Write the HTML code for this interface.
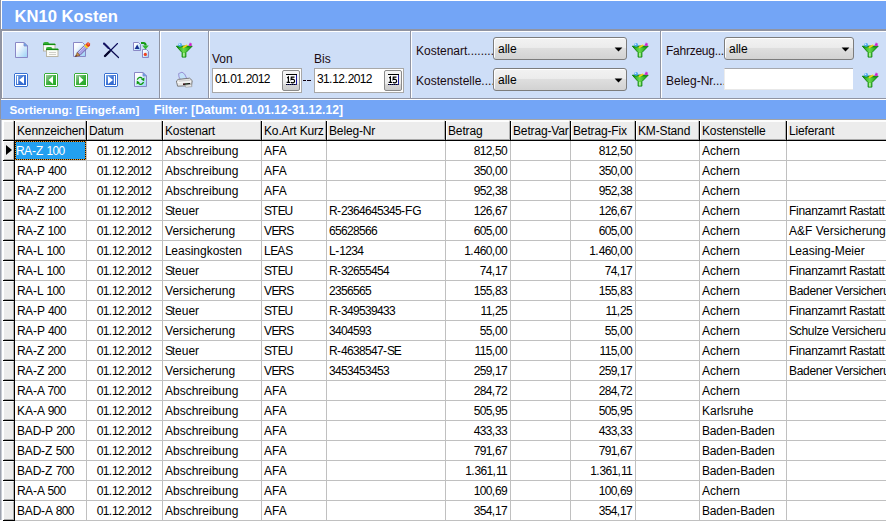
<!DOCTYPE html><html><head><meta charset="utf-8"><title>KN10 Kosten</title><style>
*{margin:0;padding:0;box-sizing:border-box}
html,body{width:886px;height:521px;overflow:hidden;background:#fff;position:relative;font-family:"Liberation Sans",sans-serif;color:#000}
div{position:absolute}
#lb{left:0;top:0;width:1px;height:521px;background:#9094a2}
#lw{left:1px;top:0;width:1px;height:120px;background:#fff}
#title{left:2px;top:1px;width:884px;height:28px;background:#73a5f6}
#title span{position:absolute;left:12.5px;top:6px;font-size:16.6px;font-weight:bold;color:#fff;white-space:nowrap}
#tl1{left:1px;top:29px;width:885px;height:2px;background:#9094a2}
#tgl{left:1px;top:29px;width:1px;height:70px;background:#9094a2}
#tw1{left:2px;top:31px;width:884px;height:1px;background:#fff}
#tw2{left:2px;top:31px;width:1px;height:67px;background:#fff}
#tb{left:3px;top:32px;width:883px;height:66px;background:#cedef7}
#tl2{left:1px;top:98px;width:885px;height:1px;background:#9094a2}
#status{left:1px;top:100px;width:885px;height:19px;background:#73a5f6;color:#fff;font-weight:bold;font-size:12px;white-space:nowrap}
#status span{position:absolute;top:3px}
.sep{top:31px;width:2px;height:67px;border-left:1px solid #9094a2;border-right:1px solid #fff}
.lbl{font-size:12px;white-space:nowrap;color:#1a0a10}
.date{height:25px;background:#fff;border:1px solid #a8a8a8}
.date>span{position:absolute;left:2px;top:3px;font-size:12px}
.calbtn{width:18px;height:21px;border:1px solid #8a8a8a;border-radius:2px;background:linear-gradient(#f6f6f6,#ececec 65%,#d6d6d6 72%,#cccccc)}
.calbtn i{position:absolute;left:3px;top:3px;width:11px;height:10px;background:#fff;border-top:1px solid #000;border-right:1px solid #1010a0;border-bottom:1px dotted #1010a0}
.calbtn b{position:absolute;left:4px;top:4px;font-size:9px;font-weight:bold;letter-spacing:-0.5px}
.combo{height:23px;border:1px solid #7c7c7c;border-radius:3px;background:linear-gradient(#f2f2f2 0%,#ececec 45%,#dedede 50%,#d2d2d2 100%);box-shadow:inset 1px 1px 0 #fff}
.combo span{position:absolute;left:4px;top:4px;font-size:12px}
.combo i{position:absolute;right:4px;top:9px;width:0;height:0;border-left:3.5px solid transparent;border-right:3.5px solid transparent;border-top:4px solid #000}
.txt{height:22px;background:#fff;border-top:1px solid #a6a8ae;border-left:1px solid #ececec;border-bottom:1px solid #e8e8e8}
svg{position:absolute}
#grid{left:0;top:119px;width:886px;height:402px;background:#fff}
.gl0{left:0;top:0;width:1px;height:401px;background:#9ea2ad}
.gl1{left:1px;top:0;width:1px;height:401px;background:#c8ccd4}
.gl2{left:2px;top:0;width:2px;height:401px;background:#fff}
.hc{top:1px;height:20px;background:#ececec;border-top:2px solid #fdfdfd;border-bottom:1px solid #a8a8a8;font-size:12px;white-space:nowrap;overflow:hidden;border-left:1px solid #fff;border-right:1px solid #b0b0b0}
.hc span{position:absolute;left:1px;top:2px;letter-spacing:-0.15px}
.hl{top:2px;width:1px;height:19px;background:#000}
.hb{left:3px;top:21px;width:883px;height:1px;background:#000}
.rhh{left:4px;top:1px;width:10px;height:20px;background:#ececec;border-top:2px solid #fdfdfd;border-bottom:1px solid #a8a8a8;border-right:1px solid #b0b0b0}
.rh{left:4px;width:10px;height:19px;background:#ececec;border-top:1px solid #fff;border-bottom:1px solid #a8a8a8;border-right:1px solid #b0b0b0}
.rl{left:3px;width:11px;height:1px;background:#000}
.cell{height:19px;font-size:12px;white-space:nowrap;overflow:hidden;padding-top:3px}
.cell.al{padding-left:2px}
.cell.ac{text-align:center;padding-right:1px}
.cell.ar{text-align:right;padding-right:3px}
.d{letter-spacing:-0.67px}
.s1{letter-spacing:-0.35px}.s2{letter-spacing:-0.6px}.s3{letter-spacing:-0.8px}.s4{letter-spacing:-1.1px}.s5{letter-spacing:-1.3px}
.sel{background:linear-gradient(#22a0f0,#22a0f0) padding-box,linear-gradient(#111,#111) border-box;color:#fff;border:1px dotted #f09a20;padding-top:2px}
.sel.al{padding-left:0}
.vl{top:22px;width:1px;height:380px;background:#c0c0c0}
.rowl{left:15px;width:871px;height:1px;background:#c0c0c0}
.tri{left:6px;top:26px;width:0;height:0;border-top:5.5px solid transparent;border-bottom:5.5px solid transparent;border-left:6.5px solid #000}
.gtop{left:1px;top:0;width:885px;height:1px;background:#a4a4a4}
.vblk{left:14px;top:2px;width:1px;height:400px;background:#000}

</style></head><body>
<div id="lb"></div>
<div id="lw"></div>
<div id="title"><span>KN10 Kosten</span></div>
<div id="tb"></div>
<div id="tl1"></div>
<div id="tgl"></div>
<div id="tw1"></div>
<div id="tw2"></div>
<div id="tl2"></div>
<div id="status"><span style="left:8.5px;font-size:11.7px">Sortierung: [Eingef.am]</span><span style="left:153px;font-size:12.15px">Filter: [Datum: 01.01.12-31.12.12]</span></div>
<div class="sep" style="left:159px"></div>
<div class="sep" style="left:208px"></div>
<div class="sep" style="left:410px"></div>
<div class="sep" style="left:660px"></div>
<svg width="886" height="100" style="left:0;top:0">
<defs>
<linearGradient id="pg" x1="0" y1="0" x2="1" y2="1"><stop offset="0" stop-color="#ffffff"/><stop offset="0.3" stop-color="#f6f9fe"/><stop offset="1" stop-color="#96d0f6"/></linearGradient>
<linearGradient id="bg1" x1="0" y1="0" x2="1" y2="1"><stop offset="0" stop-color="#7aa6e8"/><stop offset="0.5" stop-color="#3c72d4"/><stop offset="1" stop-color="#2e64cc"/></linearGradient>
<linearGradient id="gg1" x1="0" y1="0" x2="1" y2="1"><stop offset="0" stop-color="#9ccc9c"/><stop offset="0.5" stop-color="#40b040"/><stop offset="1" stop-color="#20a820"/></linearGradient>
<linearGradient id="fg" x1="0" y1="0" x2="1" y2="0"><stop offset="0" stop-color="#0c900c"/><stop offset="0.45" stop-color="#6ad84a"/><stop offset="1" stop-color="#0c9a0c"/></linearGradient>

</defs>
<!-- new doc -->
<g transform="translate(15,42)">
<path d="M0.5,0.5 H9 L12.5,4 V15.5 H0.5 Z" fill="url(#pg)" stroke="#8a88c6"/>
<path d="M9,0.5 V4 H12.5 Z" fill="#58aaf0" stroke="#8a88c6" stroke-width="0.8"/>
</g>
<!-- folder stack -->
<g transform="translate(42,41)">
<path d="M1,3 Q1,1 3,1 L6,1 L7.5,2.5 L13,2.5 L13,4 L1,4 Z" fill="#36b036"/>
<rect x="1.5" y="3.5" width="11.5" height="6.5" fill="#fafaf4" stroke="#b4b09c" stroke-width="0.9"/>
<path d="M1,3.5 L13.5,3.5" stroke="#128c12" stroke-width="1.2"/>
<path d="M4,6.5 L10,6.5" stroke="#cfcfc6" stroke-width="0.8"/>
<path d="M4,8 Q4,6 6,6 L9,6 L10.5,7.5 L16,7.5 L16,9 L4,9 Z" fill="#36b036"/>
<rect x="4.5" y="8.5" width="11.5" height="7" fill="#fcfcf8" stroke="#b4b09c" stroke-width="0.9"/>
<path d="M4,8.5 L16.5,8.5" stroke="#128c12" stroke-width="1.2"/>
<path d="M7,11.5 L14,11.5 M7,13.5 L14,13.5" stroke="#c4c4bc" stroke-width="0.8"/>
</g>
<!-- edit -->
<g transform="translate(73,42)">
<path d="M0.5,0.5 H9.5 L12.5,3.5 V14.5 H0.5 Z" fill="url(#pg)" stroke="#8a88c6"/>
<path d="M4.2,10.6 L11.4,3.4 L14.2,6.2 L7,13.4 Z" fill="#aaa2e6" stroke="#5a5298" stroke-width="0.8" stroke-linejoin="round"/>
<path d="M5.5,10.5 L11.8,4.2" stroke="#d4d0f8" stroke-width="0.8"/>
<path d="M2.4,14.6 L4.2,10.6 L7,13.4 Z" fill="#c8924a" stroke="#7a4a20" stroke-width="0.6" stroke-linejoin="round"/>
<path d="M2.2,14.8 L3,13 L4,14 Z" fill="#3a1a2a"/>
<path d="M11,3.8 L12.6,2.2 L15.4,5 L13.8,6.6 Z" fill="#f6d020"/>
<path d="M12.4,2.4 L14.4,0.4 Q15.6,0 16.6,1.2 Q17.4,2.4 17,3.4 L15.2,5.2 Z" fill="#e4401c"/>
<circle cx="15.2" cy="1.8" r="0.9" fill="#ff7a50"/>
</g>
<!-- X -->
<g transform="translate(101,40)">
<path d="M3,3.5 L17.5,17.5" stroke="#0a0a50" stroke-width="1.2" stroke-linecap="round"/>
<path d="M3,3.5 L7.5,8" stroke="#141464" stroke-width="2" stroke-linecap="round"/>
<path d="M16.5,3.5 L4,16" stroke="#0a0a5a" stroke-width="1.1" stroke-linecap="round"/>
<path d="M8.5,11.5 L4,16" stroke="#06062e" stroke-width="2.4" stroke-linecap="round"/>
</g>
<!-- import -->
<g transform="translate(133,42)">
<path d="M0.5,0.5 H5.5 L7.5,2.5 V8.5 H0.5 Z" fill="url(#pg)" stroke="#8a88c6"/>
<path d="M1.6,6.9 L4.2,2.6 L6.6,6.9 Z" fill="#16308e"/>
<path d="M9.5,7.5 H13.5 L15.5,9.5 V15.5 H9.5 Z" fill="url(#pg)" stroke="#8a88c6"/>
<circle cx="12.3" cy="12.4" r="1.6" fill="#f04020"/>
<path d="M8,1 L10.5,1 Q12.6,1 12.6,3.6" stroke="#169a16" stroke-width="2.2" fill="none"/>
<path d="M9.2,3.6 L15.8,3.6 L12.5,7.4 Z" fill="#34b834"/>
</g>
<!-- nav first -->
<g transform="translate(14,73)">
<path d="M1,0.5 H13 L13.5,1 V13 L13,13.5 H1 L0.5,13 V1 Z" fill="#fff" stroke="#3a72d2"/>
<rect x="2" y="2" width="10" height="10" fill="url(#bg1)"/>
<rect x="3" y="3" width="1.2" height="8" fill="#fff"/>
<path d="M5,7 L10,3 L10,11 Z" fill="#fff"/>
</g>
<!-- nav prev -->
<g transform="translate(44,73)">
<path d="M1,0.5 H13 L13.5,1 V13 L13,13.5 H1 L0.5,13 V1 Z" fill="#fff" stroke="#3cb03c"/>
<rect x="2" y="2" width="10" height="10" fill="url(#gg1)"/>
<path d="M4.5,7 L9,3 L9,11 Z" fill="#fff"/>
</g>
<!-- nav next -->
<g transform="translate(74,73)">
<path d="M1,0.5 H13 L13.5,1 V13 L13,13.5 H1 L0.5,13 V1 Z" fill="#fff" stroke="#3cb03c"/>
<rect x="2" y="2" width="10" height="10" fill="url(#gg1)"/>
<path d="M5,3 L9.5,7 L5,11 Z" fill="#fff"/>
</g>
<!-- nav last -->
<g transform="translate(104,73)">
<path d="M1,0.5 H13 L13.5,1 V13 L13,13.5 H1 L0.5,13 V1 Z" fill="#fff" stroke="#3a72d2"/>
<rect x="2" y="2" width="10" height="10" fill="url(#bg1)"/>
<rect x="9.8" y="3" width="1.2" height="8" fill="#fff"/>
<path d="M4,3 L9,7 L4,11 Z" fill="#fff"/>
</g>
<!-- refresh doc -->
<g transform="translate(134,72)">
<path d="M0.5,0.5 H9 L12.5,4 V14.5 H0.5 Z" fill="url(#pg)" stroke="#8a88c6"/>
<path d="M9,0.5 V4 H12.5 Z" fill="#58aaf0" stroke="#8a88c6" stroke-width="0.8"/>
<path d="M3.2,7.6 Q5.6,3.8 8.4,6.6" stroke="#0a9a0a" stroke-width="1.3" fill="none"/>
<path d="M7,7.4 L10.4,5.4 L10.2,9.2 Z" fill="#0a9a0a"/>
<path d="M9.6,10.2 Q7.2,14 4.4,11.2" stroke="#0a9a0a" stroke-width="1.3" fill="none"/>
<path d="M5.8,10.6 L2.6,12.4 L2.8,8.6 Z" fill="#0a9a0a"/>
</g>
<!-- funnel 1 -->
<g transform="translate(176,42)">
<path d="M0.3,4.2 L16.2,4.2 L9.9,10.6 L9.9,15.1 L6.1,15.1 L6.1,10.6 Z" fill="url(#fg)" stroke="#0a840a" stroke-width="0.9" stroke-linejoin="round"/>
<rect x="7.2" y="11" width="1.4" height="3.5" fill="#b8f0a8"/>
<path d="M0.8,4.4 Q8,3.2 15.7,4.4 L14.5,5.6 Q8,4.8 2,5.6 Z" fill="#0e8e0e"/>
<circle cx="4.1" cy="2.9" r="1.9" fill="#48a6f0"/><circle cx="3.6" cy="2.3" r="0.8" fill="#e8f8ff"/>
<path d="M7.4,5.3 L10.6,3.5" stroke="#f4d414" stroke-width="1.7" stroke-linecap="round"/>
<path d="M14,0.3 L14.8,1.5 L16.2,1.4 L15.5,2.5 L16.2,3.7 L14.8,3.6 L14,4.8 L13.4,3.6 L12,3.4 L13.1,2.4 Z" fill="#d41ccc"/>
</g>
<!-- printer -->
<g transform="translate(175,70)">
<path d="M3.6,3.6 L7,2.2 L9.6,4 L11.8,8.6 L5.6,9.8 L4,7 Z" fill="#c2e2fa" stroke="#9890d4" stroke-width="1" stroke-linejoin="round"/>
<path d="M1.4,11 L3.2,9.4 L14.6,8.2 L17.2,10.6 L16.6,15.6 L2.6,16.2 Z" fill="#e8e8e8" stroke="#7c7c7c" stroke-width="1" stroke-linejoin="round"/>
<path d="M3.6,10.4 L14.4,9.4 L15.6,10.8 L4.2,12 Z" fill="#d0d0d0"/>
<path d="M2.4,12.4 L16,11.8" stroke="#fafafa" stroke-width="1"/>
<path d="M8,13.4 L15.2,12.9 L15.2,14.5 L8,15 Z" fill="#0a0a0a"/>
<path d="M8.4,14 L9.4,14" stroke="#c03030" stroke-width="0.8"/>
<path d="M11.2,14 L12.2,14" stroke="#30a030" stroke-width="0.8"/>
<path d="M10,15.2 L16.4,14.6 L17,16.6 L10.6,17.2 Z" fill="#f6f6f6" stroke="#9a9a9a" stroke-width="0.7"/>
</g>
<g transform="translate(632,42)">
<path d="M0.3,4.2 L16.2,4.2 L9.9,10.6 L9.9,15.1 L6.1,15.1 L6.1,10.6 Z" fill="url(#fg)" stroke="#0a840a" stroke-width="0.9" stroke-linejoin="round"/>
<rect x="7.2" y="11" width="1.4" height="3.5" fill="#b8f0a8"/>
<path d="M0.8,4.4 Q8,3.2 15.7,4.4 L14.5,5.6 Q8,4.8 2,5.6 Z" fill="#0e8e0e"/>
<circle cx="4.1" cy="2.9" r="1.9" fill="#48a6f0"/><circle cx="3.6" cy="2.3" r="0.8" fill="#e8f8ff"/>
<path d="M7.4,5.3 L10.6,3.5" stroke="#f4d414" stroke-width="1.7" stroke-linecap="round"/>
<path d="M14,0.3 L14.8,1.5 L16.2,1.4 L15.5,2.5 L16.2,3.7 L14.8,3.6 L14,4.8 L13.4,3.6 L12,3.4 L13.1,2.4 Z" fill="#d41ccc"/>
</g>
<g transform="translate(632,71)">
<path d="M0.3,4.2 L16.2,4.2 L9.9,10.6 L9.9,15.1 L6.1,15.1 L6.1,10.6 Z" fill="url(#fg)" stroke="#0a840a" stroke-width="0.9" stroke-linejoin="round"/>
<rect x="7.2" y="11" width="1.4" height="3.5" fill="#b8f0a8"/>
<path d="M0.8,4.4 Q8,3.2 15.7,4.4 L14.5,5.6 Q8,4.8 2,5.6 Z" fill="#0e8e0e"/>
<circle cx="4.1" cy="2.9" r="1.9" fill="#48a6f0"/><circle cx="3.6" cy="2.3" r="0.8" fill="#e8f8ff"/>
<path d="M7.4,5.3 L10.6,3.5" stroke="#f4d414" stroke-width="1.7" stroke-linecap="round"/>
<path d="M14,0.3 L14.8,1.5 L16.2,1.4 L15.5,2.5 L16.2,3.7 L14.8,3.6 L14,4.8 L13.4,3.6 L12,3.4 L13.1,2.4 Z" fill="#d41ccc"/>
</g>
<g transform="translate(862,42)">
<path d="M0.3,4.2 L16.2,4.2 L9.9,10.6 L9.9,15.1 L6.1,15.1 L6.1,10.6 Z" fill="url(#fg)" stroke="#0a840a" stroke-width="0.9" stroke-linejoin="round"/>
<rect x="7.2" y="11" width="1.4" height="3.5" fill="#b8f0a8"/>
<path d="M0.8,4.4 Q8,3.2 15.7,4.4 L14.5,5.6 Q8,4.8 2,5.6 Z" fill="#0e8e0e"/>
<circle cx="4.1" cy="2.9" r="1.9" fill="#48a6f0"/><circle cx="3.6" cy="2.3" r="0.8" fill="#e8f8ff"/>
<path d="M7.4,5.3 L10.6,3.5" stroke="#f4d414" stroke-width="1.7" stroke-linecap="round"/>
<path d="M14,0.3 L14.8,1.5 L16.2,1.4 L15.5,2.5 L16.2,3.7 L14.8,3.6 L14,4.8 L13.4,3.6 L12,3.4 L13.1,2.4 Z" fill="#d41ccc"/>
</g>
<g transform="translate(862,72)">
<path d="M0.3,4.2 L16.2,4.2 L9.9,10.6 L9.9,15.1 L6.1,15.1 L6.1,10.6 Z" fill="url(#fg)" stroke="#0a840a" stroke-width="0.9" stroke-linejoin="round"/>
<rect x="7.2" y="11" width="1.4" height="3.5" fill="#b8f0a8"/>
<path d="M0.8,4.4 Q8,3.2 15.7,4.4 L14.5,5.6 Q8,4.8 2,5.6 Z" fill="#0e8e0e"/>
<circle cx="4.1" cy="2.9" r="1.9" fill="#48a6f0"/><circle cx="3.6" cy="2.3" r="0.8" fill="#e8f8ff"/>
<path d="M7.4,5.3 L10.6,3.5" stroke="#f4d414" stroke-width="1.7" stroke-linecap="round"/>
<path d="M14,0.3 L14.8,1.5 L16.2,1.4 L15.5,2.5 L16.2,3.7 L14.8,3.6 L14,4.8 L13.4,3.6 L12,3.4 L13.1,2.4 Z" fill="#d41ccc"/>
</g>
</svg>
<div class="lbl" style="left:212px;top:52px">Von</div>
<div class="date" style="left:212px;top:68px;width:90px"><span><span class="d">01</span>.<span class="d">01</span>.<span class="d">2012</span></span></div>
<div class="calbtn" style="left:282px;top:70px"><svg width="18" height="21" style="left:-1px;top:-1px"><rect x="4" y="4" width="11" height="1.1" fill="#000"/><rect x="4" y="5.1" width="10.5" height="9" fill="#fff"/><path d="M14.5,5 V14.5" stroke="#1a1aa0"/><path d="M4,14.5 H14.5" stroke="#20207a"/><path d="M4,14.5 H14.5" stroke="#000" stroke-dasharray="1,1"/><path d="M5.1,8 L6.4,7 V12.6 M4.6,12.4 H8" stroke="#000" stroke-width="1.2" fill="none"/><path d="M12.5,7.1 H9.3 L9.1,9.6 Q9.7,9.2 10.6,9.2 Q12.6,9.3 12.6,11 Q12.6,12.8 10.6,12.8 Q9.5,12.8 8.8,12.2" stroke="#000" stroke-width="1.2" fill="none"/></svg></div>
<div style="left:303px;top:80px;width:3px;height:1px;background:#100010"></div><div style="left:307px;top:80px;width:4px;height:1px;background:#100010"></div>
<div class="lbl" style="left:314px;top:52px">Bis</div>
<div class="date" style="left:314px;top:68px;width:90px"><span><span class="d">31</span>.<span class="d">12</span>.<span class="d">2012</span></span></div>
<div class="calbtn" style="left:384px;top:70px"><svg width="18" height="21" style="left:-1px;top:-1px"><rect x="4" y="4" width="11" height="1.1" fill="#000"/><rect x="4" y="5.1" width="10.5" height="9" fill="#fff"/><path d="M14.5,5 V14.5" stroke="#1a1aa0"/><path d="M4,14.5 H14.5" stroke="#20207a"/><path d="M4,14.5 H14.5" stroke="#000" stroke-dasharray="1,1"/><path d="M5.1,8 L6.4,7 V12.6 M4.6,12.4 H8" stroke="#000" stroke-width="1.2" fill="none"/><path d="M12.5,7.1 H9.3 L9.1,9.6 Q9.7,9.2 10.6,9.2 Q12.6,9.3 12.6,11 Q12.6,12.8 10.6,12.8 Q9.5,12.8 8.8,12.2" stroke="#000" stroke-width="1.2" fill="none"/></svg></div>
<div class="lbl" style="left:416px;top:44px">Kostenart........</div>
<div class="combo" style="left:493px;top:37px;width:134px"><span>alle</span><svg width="9" height="6" style="right:3px;top:9px"><path d="M0.6,0.5 H8.4 L4.5,4.6 Z" fill="#000"/></svg></div>
<div class="lbl" style="left:416px;top:74px">Kostenstelle.....</div>
<div class="combo" style="left:493px;top:68px;width:134px"><span>alle</span><svg width="9" height="6" style="right:3px;top:9px"><path d="M0.6,0.5 H8.4 L4.5,4.6 Z" fill="#000"/></svg></div>
<div class="lbl" style="left:666px;top:44px;letter-spacing:-0.25px">Fahrzeug...</div>
<div class="combo" style="left:724px;top:37px;width:130px"><span>alle</span><svg width="9" height="6" style="right:3px;top:9px"><path d="M0.6,0.5 H8.4 L4.5,4.6 Z" fill="#000"/></svg></div>
<div class="lbl" style="left:666px;top:74px">Beleg-Nr....</div>
<div class="txt" style="left:724px;top:68px;width:129px"></div>

<div id="grid">
<div class="gl0"></div><div class="gl1"></div><div class="gl2"></div>
<div class="hc" style="left:15px;width:71px"><span>Kennzeichen</span></div>
<div class="hc" style="left:87px;width:75px"><span>Datum</span></div>
<div class="hc" style="left:163px;width:98px"><span>Kostenart</span></div>
<div class="hc" style="left:262px;width:64px"><span>Ko.Art Kurz</span></div>
<div class="hc" style="left:327px;width:118px"><span>Beleg-Nr</span></div>
<div class="hc" style="left:446px;width:64px"><span>Betrag</span></div>
<div class="hc" style="left:511px;width:59px"><span>Betrag-Var</span></div>
<div class="hc" style="left:571px;width:64px"><span>Betrag-Fix</span></div>
<div class="hc" style="left:636px;width:63px"><span>KM-Stand</span></div>
<div class="hc" style="left:700px;width:86px"><span>Kostenstelle</span></div>
<div class="hc" style="left:787px;width:213px"><span>Lieferant</span></div>
<div class="rhh"></div>
<div class="rh" style="top:22px"></div>
<div class="cell al sel" style="left:15px;top:22px;width:71px"><span class="s3">R</span>A-Z <span class="d">100</span></div>
<div class="cell ac" style="left:87px;top:22px;width:75px"><span class="d">01</span>.<span class="d">12</span>.<span class="d">2012</span></div>
<div class="cell al" style="left:163px;top:22px;width:98px">Abschreibung</div>
<div class="cell al" style="left:262px;top:22px;width:64px">AFA</div>
<div class="cell al" style="left:327px;top:22px;width:118px"></div>
<div class="cell ar" style="left:446px;top:22px;width:64px"><span class="d">812</span>,<span class="d">50</span></div>
<div class="cell ar" style="left:511px;top:22px;width:59px"></div>
<div class="cell ar" style="left:571px;top:22px;width:64px"><span class="d">812</span>,<span class="d">50</span></div>
<div class="cell ar" style="left:636px;top:22px;width:63px"></div>
<div class="cell al" style="left:700px;top:22px;width:86px">Achern</div>
<div class="cell al" style="left:787px;top:22px;width:213px"></div>
<div class="rh" style="top:42px"></div>
<div class="cell al" style="left:15px;top:42px;width:71px"><span class="s3">R</span>A-P <span class="d">400</span></div>
<div class="cell ac" style="left:87px;top:42px;width:75px"><span class="d">01</span>.<span class="d">12</span>.<span class="d">2012</span></div>
<div class="cell al" style="left:163px;top:42px;width:98px">Abschreibung</div>
<div class="cell al" style="left:262px;top:42px;width:64px">AFA</div>
<div class="cell al" style="left:327px;top:42px;width:118px"></div>
<div class="cell ar" style="left:446px;top:42px;width:64px"><span class="d">350</span>,<span class="d">00</span></div>
<div class="cell ar" style="left:511px;top:42px;width:59px"></div>
<div class="cell ar" style="left:571px;top:42px;width:64px"><span class="d">350</span>,<span class="d">00</span></div>
<div class="cell ar" style="left:636px;top:42px;width:63px"></div>
<div class="cell al" style="left:700px;top:42px;width:86px">Achern</div>
<div class="cell al" style="left:787px;top:42px;width:213px"></div>
<div class="rh" style="top:62px"></div>
<div class="cell al" style="left:15px;top:62px;width:71px"><span class="s3">R</span>A-Z <span class="d">200</span></div>
<div class="cell ac" style="left:87px;top:62px;width:75px"><span class="d">01</span>.<span class="d">12</span>.<span class="d">2012</span></div>
<div class="cell al" style="left:163px;top:62px;width:98px">Abschreibung</div>
<div class="cell al" style="left:262px;top:62px;width:64px">AFA</div>
<div class="cell al" style="left:327px;top:62px;width:118px"></div>
<div class="cell ar" style="left:446px;top:62px;width:64px"><span class="d">952</span>,<span class="d">38</span></div>
<div class="cell ar" style="left:511px;top:62px;width:59px"></div>
<div class="cell ar" style="left:571px;top:62px;width:64px"><span class="d">952</span>,<span class="d">38</span></div>
<div class="cell ar" style="left:636px;top:62px;width:63px"></div>
<div class="cell al" style="left:700px;top:62px;width:86px">Achern</div>
<div class="cell al" style="left:787px;top:62px;width:213px"></div>
<div class="rh" style="top:82px"></div>
<div class="cell al" style="left:15px;top:82px;width:71px"><span class="s3">R</span>A-Z <span class="d">100</span></div>
<div class="cell ac" style="left:87px;top:82px;width:75px"><span class="d">01</span>.<span class="d">12</span>.<span class="d">2012</span></div>
<div class="cell al" style="left:163px;top:82px;width:98px"><span class="s5">S</span>teuer</div>
<div class="cell al" style="left:262px;top:82px;width:64px"><span class="s5">S</span><span class="s1">T</span><span class="s4">E</span>U</div>
<div class="cell al" style="left:327px;top:82px;width:118px"><span class="s3">R</span>-<span class="d">2364645345</span>-FG</div>
<div class="cell ar" style="left:446px;top:82px;width:64px"><span class="d">126</span>,<span class="d">67</span></div>
<div class="cell ar" style="left:511px;top:82px;width:59px"></div>
<div class="cell ar" style="left:571px;top:82px;width:64px"><span class="d">126</span>,<span class="d">67</span></div>
<div class="cell ar" style="left:636px;top:82px;width:63px"></div>
<div class="cell al" style="left:700px;top:82px;width:86px">Achern</div>
<div class="cell al" style="left:787px;top:82px;width:213px;letter-spacing:-0.3px">Finanzamrt <span class="s3">R</span>astatt</div>
<div class="rh" style="top:102px"></div>
<div class="cell al" style="left:15px;top:102px;width:71px"><span class="s3">R</span>A-Z <span class="d">100</span></div>
<div class="cell ac" style="left:87px;top:102px;width:75px"><span class="d">01</span>.<span class="d">12</span>.<span class="d">2012</span></div>
<div class="cell al" style="left:163px;top:102px;width:98px"><span class="s2">V</span>ersicherung</div>
<div class="cell al" style="left:262px;top:102px;width:64px"><span class="s2">V</span><span class="s4">E</span><span class="s3">R</span>S</div>
<div class="cell al" style="left:327px;top:102px;width:118px"><span class="d">65628566</span></div>
<div class="cell ar" style="left:446px;top:102px;width:64px"><span class="d">605</span>,<span class="d">00</span></div>
<div class="cell ar" style="left:511px;top:102px;width:59px"></div>
<div class="cell ar" style="left:571px;top:102px;width:64px"><span class="d">605</span>,<span class="d">00</span></div>
<div class="cell ar" style="left:636px;top:102px;width:63px"></div>
<div class="cell al" style="left:700px;top:102px;width:86px">Achern</div>
<div class="cell al" style="left:787px;top:102px;width:213px">A&amp;F <span class="s2">V</span>ersicherung</div>
<div class="rh" style="top:122px"></div>
<div class="cell al" style="left:15px;top:122px;width:71px"><span class="s3">R</span>A-L <span class="d">100</span></div>
<div class="cell ac" style="left:87px;top:122px;width:75px"><span class="d">01</span>.<span class="d">12</span>.<span class="d">2012</span></div>
<div class="cell al" style="left:163px;top:122px;width:98px"><span class="s1">L</span>easingkosten</div>
<div class="cell al" style="left:262px;top:122px;width:64px"><span class="s1">L</span><span class="s4">E</span>AS</div>
<div class="cell al" style="left:327px;top:122px;width:118px"><span class="s1">L</span>-<span class="d">1234</span></div>
<div class="cell ar" style="left:446px;top:122px;width:64px"><span class="d">1</span>.<span class="d">460</span>,<span class="d">00</span></div>
<div class="cell ar" style="left:511px;top:122px;width:59px"></div>
<div class="cell ar" style="left:571px;top:122px;width:64px"><span class="d">1</span>.<span class="d">460</span>,<span class="d">00</span></div>
<div class="cell ar" style="left:636px;top:122px;width:63px"></div>
<div class="cell al" style="left:700px;top:122px;width:86px">Achern</div>
<div class="cell al" style="left:787px;top:122px;width:213px"><span class="s1">L</span>easing-Meier</div>
<div class="rh" style="top:142px"></div>
<div class="cell al" style="left:15px;top:142px;width:71px"><span class="s3">R</span>A-L <span class="d">100</span></div>
<div class="cell ac" style="left:87px;top:142px;width:75px"><span class="d">01</span>.<span class="d">12</span>.<span class="d">2012</span></div>
<div class="cell al" style="left:163px;top:142px;width:98px"><span class="s5">S</span>teuer</div>
<div class="cell al" style="left:262px;top:142px;width:64px"><span class="s5">S</span><span class="s1">T</span><span class="s4">E</span>U</div>
<div class="cell al" style="left:327px;top:142px;width:118px"><span class="s3">R</span>-<span class="d">32655454</span></div>
<div class="cell ar" style="left:446px;top:142px;width:64px"><span class="d">74</span>,<span class="d">17</span></div>
<div class="cell ar" style="left:511px;top:142px;width:59px"></div>
<div class="cell ar" style="left:571px;top:142px;width:64px"><span class="d">74</span>,<span class="d">17</span></div>
<div class="cell ar" style="left:636px;top:142px;width:63px"></div>
<div class="cell al" style="left:700px;top:142px;width:86px">Achern</div>
<div class="cell al" style="left:787px;top:142px;width:213px;letter-spacing:-0.3px">Finanzamrt <span class="s3">R</span>astatt</div>
<div class="rh" style="top:162px"></div>
<div class="cell al" style="left:15px;top:162px;width:71px"><span class="s3">R</span>A-L <span class="d">100</span></div>
<div class="cell ac" style="left:87px;top:162px;width:75px"><span class="d">01</span>.<span class="d">12</span>.<span class="d">2012</span></div>
<div class="cell al" style="left:163px;top:162px;width:98px"><span class="s2">V</span>ersicherung</div>
<div class="cell al" style="left:262px;top:162px;width:64px"><span class="s2">V</span><span class="s4">E</span><span class="s3">R</span>S</div>
<div class="cell al" style="left:327px;top:162px;width:118px"><span class="d">2356565</span></div>
<div class="cell ar" style="left:446px;top:162px;width:64px"><span class="d">155</span>,<span class="d">83</span></div>
<div class="cell ar" style="left:511px;top:162px;width:59px"></div>
<div class="cell ar" style="left:571px;top:162px;width:64px"><span class="d">155</span>,<span class="d">83</span></div>
<div class="cell ar" style="left:636px;top:162px;width:63px"></div>
<div class="cell al" style="left:700px;top:162px;width:86px">Achern</div>
<div class="cell al" style="left:787px;top:162px;width:213px;letter-spacing:-0.3px"><span class="s1">B</span>adener <span class="s2">V</span>ersicherung</div>
<div class="rh" style="top:182px"></div>
<div class="cell al" style="left:15px;top:182px;width:71px"><span class="s3">R</span>A-P <span class="d">400</span></div>
<div class="cell ac" style="left:87px;top:182px;width:75px"><span class="d">01</span>.<span class="d">12</span>.<span class="d">2012</span></div>
<div class="cell al" style="left:163px;top:182px;width:98px"><span class="s5">S</span>teuer</div>
<div class="cell al" style="left:262px;top:182px;width:64px"><span class="s5">S</span><span class="s1">T</span><span class="s4">E</span>U</div>
<div class="cell al" style="left:327px;top:182px;width:118px"><span class="s3">R</span>-<span class="d">349539433</span></div>
<div class="cell ar" style="left:446px;top:182px;width:64px"><span class="d">11</span>,<span class="d">25</span></div>
<div class="cell ar" style="left:511px;top:182px;width:59px"></div>
<div class="cell ar" style="left:571px;top:182px;width:64px"><span class="d">11</span>,<span class="d">25</span></div>
<div class="cell ar" style="left:636px;top:182px;width:63px"></div>
<div class="cell al" style="left:700px;top:182px;width:86px">Achern</div>
<div class="cell al" style="left:787px;top:182px;width:213px;letter-spacing:-0.3px">Finanzamrt <span class="s3">R</span>astatt</div>
<div class="rh" style="top:202px"></div>
<div class="cell al" style="left:15px;top:202px;width:71px"><span class="s3">R</span>A-P <span class="d">400</span></div>
<div class="cell ac" style="left:87px;top:202px;width:75px"><span class="d">01</span>.<span class="d">12</span>.<span class="d">2012</span></div>
<div class="cell al" style="left:163px;top:202px;width:98px"><span class="s2">V</span>ersicherung</div>
<div class="cell al" style="left:262px;top:202px;width:64px"><span class="s2">V</span><span class="s4">E</span><span class="s3">R</span>S</div>
<div class="cell al" style="left:327px;top:202px;width:118px"><span class="d">3404593</span></div>
<div class="cell ar" style="left:446px;top:202px;width:64px"><span class="d">55</span>,<span class="d">00</span></div>
<div class="cell ar" style="left:511px;top:202px;width:59px"></div>
<div class="cell ar" style="left:571px;top:202px;width:64px"><span class="d">55</span>,<span class="d">00</span></div>
<div class="cell ar" style="left:636px;top:202px;width:63px"></div>
<div class="cell al" style="left:700px;top:202px;width:86px">Achern</div>
<div class="cell al" style="left:787px;top:202px;width:213px;letter-spacing:-0.3px"><span class="s5">S</span>chulze <span class="s2">V</span>ersicherung</div>
<div class="rh" style="top:222px"></div>
<div class="cell al" style="left:15px;top:222px;width:71px"><span class="s3">R</span>A-Z <span class="d">200</span></div>
<div class="cell ac" style="left:87px;top:222px;width:75px"><span class="d">01</span>.<span class="d">12</span>.<span class="d">2012</span></div>
<div class="cell al" style="left:163px;top:222px;width:98px"><span class="s5">S</span>teuer</div>
<div class="cell al" style="left:262px;top:222px;width:64px"><span class="s5">S</span><span class="s1">T</span><span class="s4">E</span>U</div>
<div class="cell al" style="left:327px;top:222px;width:118px"><span class="s3">R</span>-<span class="d">4638547</span>-<span class="s5">S</span>E</div>
<div class="cell ar" style="left:446px;top:222px;width:64px"><span class="d">115</span>,<span class="d">00</span></div>
<div class="cell ar" style="left:511px;top:222px;width:59px"></div>
<div class="cell ar" style="left:571px;top:222px;width:64px"><span class="d">115</span>,<span class="d">00</span></div>
<div class="cell ar" style="left:636px;top:222px;width:63px"></div>
<div class="cell al" style="left:700px;top:222px;width:86px">Achern</div>
<div class="cell al" style="left:787px;top:222px;width:213px;letter-spacing:-0.3px">Finanzamrt <span class="s3">R</span>astatt</div>
<div class="rh" style="top:242px"></div>
<div class="cell al" style="left:15px;top:242px;width:71px"><span class="s3">R</span>A-Z <span class="d">200</span></div>
<div class="cell ac" style="left:87px;top:242px;width:75px"><span class="d">01</span>.<span class="d">12</span>.<span class="d">2012</span></div>
<div class="cell al" style="left:163px;top:242px;width:98px"><span class="s2">V</span>ersicherung</div>
<div class="cell al" style="left:262px;top:242px;width:64px"><span class="s2">V</span><span class="s4">E</span><span class="s3">R</span>S</div>
<div class="cell al" style="left:327px;top:242px;width:118px"><span class="d">3453453453</span></div>
<div class="cell ar" style="left:446px;top:242px;width:64px"><span class="d">259</span>,<span class="d">17</span></div>
<div class="cell ar" style="left:511px;top:242px;width:59px"></div>
<div class="cell ar" style="left:571px;top:242px;width:64px"><span class="d">259</span>,<span class="d">17</span></div>
<div class="cell ar" style="left:636px;top:242px;width:63px"></div>
<div class="cell al" style="left:700px;top:242px;width:86px">Achern</div>
<div class="cell al" style="left:787px;top:242px;width:213px;letter-spacing:-0.3px"><span class="s1">B</span>adener <span class="s2">V</span>ersicherung</div>
<div class="rh" style="top:262px"></div>
<div class="cell al" style="left:15px;top:262px;width:71px"><span class="s3">R</span>A-A <span class="d">700</span></div>
<div class="cell ac" style="left:87px;top:262px;width:75px"><span class="d">01</span>.<span class="d">12</span>.<span class="d">2012</span></div>
<div class="cell al" style="left:163px;top:262px;width:98px">Abschreibung</div>
<div class="cell al" style="left:262px;top:262px;width:64px">AFA</div>
<div class="cell al" style="left:327px;top:262px;width:118px"></div>
<div class="cell ar" style="left:446px;top:262px;width:64px"><span class="d">284</span>,<span class="d">72</span></div>
<div class="cell ar" style="left:511px;top:262px;width:59px"></div>
<div class="cell ar" style="left:571px;top:262px;width:64px"><span class="d">284</span>,<span class="d">72</span></div>
<div class="cell ar" style="left:636px;top:262px;width:63px"></div>
<div class="cell al" style="left:700px;top:262px;width:86px">Achern</div>
<div class="cell al" style="left:787px;top:262px;width:213px"></div>
<div class="rh" style="top:282px"></div>
<div class="cell al" style="left:15px;top:282px;width:71px">KA-A <span class="d">900</span></div>
<div class="cell ac" style="left:87px;top:282px;width:75px"><span class="d">01</span>.<span class="d">12</span>.<span class="d">2012</span></div>
<div class="cell al" style="left:163px;top:282px;width:98px">Abschreibung</div>
<div class="cell al" style="left:262px;top:282px;width:64px">AFA</div>
<div class="cell al" style="left:327px;top:282px;width:118px"></div>
<div class="cell ar" style="left:446px;top:282px;width:64px"><span class="d">505</span>,<span class="d">95</span></div>
<div class="cell ar" style="left:511px;top:282px;width:59px"></div>
<div class="cell ar" style="left:571px;top:282px;width:64px"><span class="d">505</span>,<span class="d">95</span></div>
<div class="cell ar" style="left:636px;top:282px;width:63px"></div>
<div class="cell al" style="left:700px;top:282px;width:86px">Karlsruhe</div>
<div class="cell al" style="left:787px;top:282px;width:213px"></div>
<div class="rh" style="top:302px"></div>
<div class="cell al" style="left:15px;top:302px;width:71px"><span class="s1">B</span>A<span class="s1">D</span>-P <span class="d">200</span></div>
<div class="cell ac" style="left:87px;top:302px;width:75px"><span class="d">01</span>.<span class="d">12</span>.<span class="d">2012</span></div>
<div class="cell al" style="left:163px;top:302px;width:98px">Abschreibung</div>
<div class="cell al" style="left:262px;top:302px;width:64px">AFA</div>
<div class="cell al" style="left:327px;top:302px;width:118px"></div>
<div class="cell ar" style="left:446px;top:302px;width:64px"><span class="d">433</span>,<span class="d">33</span></div>
<div class="cell ar" style="left:511px;top:302px;width:59px"></div>
<div class="cell ar" style="left:571px;top:302px;width:64px"><span class="d">433</span>,<span class="d">33</span></div>
<div class="cell ar" style="left:636px;top:302px;width:63px"></div>
<div class="cell al" style="left:700px;top:302px;width:86px"><span class="s1">B</span>aden-<span class="s1">B</span>aden</div>
<div class="cell al" style="left:787px;top:302px;width:213px"></div>
<div class="rh" style="top:322px"></div>
<div class="cell al" style="left:15px;top:322px;width:71px"><span class="s1">B</span>A<span class="s1">D</span>-Z <span class="d">500</span></div>
<div class="cell ac" style="left:87px;top:322px;width:75px"><span class="d">01</span>.<span class="d">12</span>.<span class="d">2012</span></div>
<div class="cell al" style="left:163px;top:322px;width:98px">Abschreibung</div>
<div class="cell al" style="left:262px;top:322px;width:64px">AFA</div>
<div class="cell al" style="left:327px;top:322px;width:118px"></div>
<div class="cell ar" style="left:446px;top:322px;width:64px"><span class="d">791</span>,<span class="d">67</span></div>
<div class="cell ar" style="left:511px;top:322px;width:59px"></div>
<div class="cell ar" style="left:571px;top:322px;width:64px"><span class="d">791</span>,<span class="d">67</span></div>
<div class="cell ar" style="left:636px;top:322px;width:63px"></div>
<div class="cell al" style="left:700px;top:322px;width:86px"><span class="s1">B</span>aden-<span class="s1">B</span>aden</div>
<div class="cell al" style="left:787px;top:322px;width:213px"></div>
<div class="rh" style="top:342px"></div>
<div class="cell al" style="left:15px;top:342px;width:71px"><span class="s1">B</span>A<span class="s1">D</span>-Z <span class="d">700</span></div>
<div class="cell ac" style="left:87px;top:342px;width:75px"><span class="d">01</span>.<span class="d">12</span>.<span class="d">2012</span></div>
<div class="cell al" style="left:163px;top:342px;width:98px">Abschreibung</div>
<div class="cell al" style="left:262px;top:342px;width:64px">AFA</div>
<div class="cell al" style="left:327px;top:342px;width:118px"></div>
<div class="cell ar" style="left:446px;top:342px;width:64px"><span class="d">1</span>.<span class="d">361</span>,<span class="d">11</span></div>
<div class="cell ar" style="left:511px;top:342px;width:59px"></div>
<div class="cell ar" style="left:571px;top:342px;width:64px"><span class="d">1</span>.<span class="d">361</span>,<span class="d">11</span></div>
<div class="cell ar" style="left:636px;top:342px;width:63px"></div>
<div class="cell al" style="left:700px;top:342px;width:86px"><span class="s1">B</span>aden-<span class="s1">B</span>aden</div>
<div class="cell al" style="left:787px;top:342px;width:213px"></div>
<div class="rh" style="top:362px"></div>
<div class="cell al" style="left:15px;top:362px;width:71px"><span class="s3">R</span>A-A <span class="d">500</span></div>
<div class="cell ac" style="left:87px;top:362px;width:75px"><span class="d">01</span>.<span class="d">12</span>.<span class="d">2012</span></div>
<div class="cell al" style="left:163px;top:362px;width:98px">Abschreibung</div>
<div class="cell al" style="left:262px;top:362px;width:64px">AFA</div>
<div class="cell al" style="left:327px;top:362px;width:118px"></div>
<div class="cell ar" style="left:446px;top:362px;width:64px"><span class="d">100</span>,<span class="d">69</span></div>
<div class="cell ar" style="left:511px;top:362px;width:59px"></div>
<div class="cell ar" style="left:571px;top:362px;width:64px"><span class="d">100</span>,<span class="d">69</span></div>
<div class="cell ar" style="left:636px;top:362px;width:63px"></div>
<div class="cell al" style="left:700px;top:362px;width:86px">Achern</div>
<div class="cell al" style="left:787px;top:362px;width:213px"></div>
<div class="rh" style="top:382px"></div>
<div class="cell al" style="left:15px;top:382px;width:71px"><span class="s1">B</span>A<span class="s1">D</span>-A <span class="d">800</span></div>
<div class="cell ac" style="left:87px;top:382px;width:75px"><span class="d">01</span>.<span class="d">12</span>.<span class="d">2012</span></div>
<div class="cell al" style="left:163px;top:382px;width:98px">Abschreibung</div>
<div class="cell al" style="left:262px;top:382px;width:64px">AFA</div>
<div class="cell al" style="left:327px;top:382px;width:118px"></div>
<div class="cell ar" style="left:446px;top:382px;width:64px"><span class="d">354</span>,<span class="d">17</span></div>
<div class="cell ar" style="left:511px;top:382px;width:59px"></div>
<div class="cell ar" style="left:571px;top:382px;width:64px"><span class="d">354</span>,<span class="d">17</span></div>
<div class="cell ar" style="left:636px;top:382px;width:63px"></div>
<div class="cell al" style="left:700px;top:382px;width:86px"><span class="s1">B</span>aden-<span class="s1">B</span>aden</div>
<div class="cell al" style="left:787px;top:382px;width:213px"></div>
<div class="vl" style="left:86px"></div>
<div class="vl" style="left:162px"></div>
<div class="vl" style="left:261px"></div>
<div class="vl" style="left:326px"></div>
<div class="vl" style="left:445px"></div>
<div class="vl" style="left:510px"></div>
<div class="vl" style="left:570px"></div>
<div class="vl" style="left:635px"></div>
<div class="vl" style="left:699px"></div>
<div class="vl" style="left:786px"></div>
<div class="rowl" style="top:41px"></div>
<div class="rl" style="top:41px"></div>
<div class="rowl" style="top:61px"></div>
<div class="rl" style="top:61px"></div>
<div class="rowl" style="top:81px"></div>
<div class="rl" style="top:81px"></div>
<div class="rowl" style="top:101px"></div>
<div class="rl" style="top:101px"></div>
<div class="rowl" style="top:121px"></div>
<div class="rl" style="top:121px"></div>
<div class="rowl" style="top:141px"></div>
<div class="rl" style="top:141px"></div>
<div class="rowl" style="top:161px"></div>
<div class="rl" style="top:161px"></div>
<div class="rowl" style="top:181px"></div>
<div class="rl" style="top:181px"></div>
<div class="rowl" style="top:201px"></div>
<div class="rl" style="top:201px"></div>
<div class="rowl" style="top:221px"></div>
<div class="rl" style="top:221px"></div>
<div class="rowl" style="top:241px"></div>
<div class="rl" style="top:241px"></div>
<div class="rowl" style="top:261px"></div>
<div class="rl" style="top:261px"></div>
<div class="rowl" style="top:281px"></div>
<div class="rl" style="top:281px"></div>
<div class="rowl" style="top:301px"></div>
<div class="rl" style="top:301px"></div>
<div class="rowl" style="top:321px"></div>
<div class="rl" style="top:321px"></div>
<div class="rowl" style="top:341px"></div>
<div class="rl" style="top:341px"></div>
<div class="rowl" style="top:361px"></div>
<div class="rl" style="top:361px"></div>
<div class="rowl" style="top:381px"></div>
<div class="rl" style="top:381px"></div>
<div class="rowl" style="top:401px"></div>
<div class="rl" style="top:401px"></div>
<div class="rowl" style="top:421px"></div>
<div class="rl" style="top:421px"></div>
<div class="hl" style="left:86px"></div>
<div class="hl" style="left:162px"></div>
<div class="hl" style="left:261px"></div>
<div class="hl" style="left:326px"></div>
<div class="hl" style="left:445px"></div>
<div class="hl" style="left:510px"></div>
<div class="hl" style="left:570px"></div>
<div class="hl" style="left:635px"></div>
<div class="hl" style="left:699px"></div>
<div class="hl" style="left:786px"></div>
<div class="hb"></div><div class="vblk"></div><div class="gtop"></div>
<div class="tri"></div>
</div></body></html>
